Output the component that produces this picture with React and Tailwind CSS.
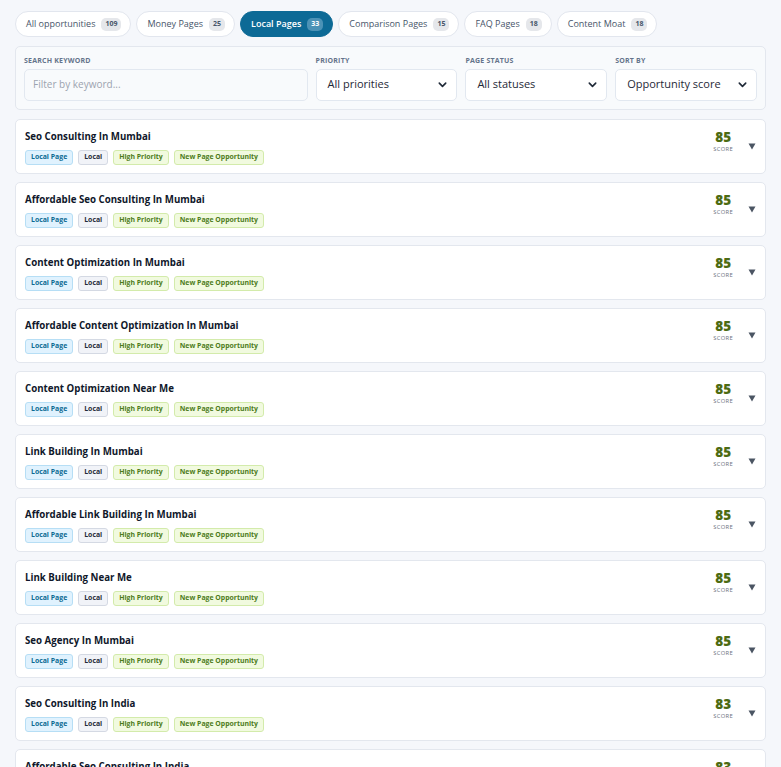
const tabs = [
  { label: 'All opportunities', count: 109 },
  { label: 'Money Pages', count: 25 },
  { label: 'Local Pages', count: 33, active: true },
  { label: 'Comparison Pages', count: 15 },
  { label: 'FAQ Pages', count: 18 },
  { label: 'Content Moat', count: 18 },
]

const rows = [
  ['Seo Consulting In Mumbai', 85],
  ['Affordable Seo Consulting In Mumbai', 85],
  ['Content Optimization In Mumbai', 85],
  ['Affordable Content Optimization In Mumbai', 85],
  ['Content Optimization Near Me', 85],
  ['Link Building In Mumbai', 85],
  ['Affordable Link Building In Mumbai', 85],
  ['Link Building Near Me', 85],
  ['Seo Agency In Mumbai', 85],
  ['Seo Consulting In India', 83],
  ['Affordable Seo Consulting In India', 83],
]

function Chevron() {
  return (
    <svg width="11" height="11" viewBox="0 0 24 24" fill="none" stroke="#1f2937" strokeWidth="3.5" strokeLinecap="round" strokeLinejoin="round">
      <path d="M5 9l7 7 7-7" />
    </svg>
  )
}

function SelectBox({ value }) {
  return (
    <div className="h-[32px] bg-white border border-[#e2e8f0] rounded-[5px] flex items-center justify-between pl-[11px] pr-[8px] text-[11px] text-[#1f2937]">
      <span>{value}</span>
      <Chevron />
    </div>
  )
}

function Badge({ children, tone }) {
  const tones = {
    blue: 'bg-[#e0f2fe] border-[#b6def5] text-[#0b6a93]',
    gray: 'bg-[#f1f3f8] border-[#d4d9e3] text-[#1f2937]',
    green: 'bg-[#f1fadf] border-[#d3ebab] text-[#4d7c1a]',
  }
  return (
    <span className={'h-[15px] px-[5px] rounded-[3px] border text-[6.9px] font-bold flex items-center ' + tones[tone]}>
      {children}
    </span>
  )
}

export default function App() {
  return (
    <div className="min-h-screen bg-[#f5f7fb] px-[15px] pt-[11px] pb-4" style={{ fontFamily: '"Open Sans", "Noto Sans", sans-serif' }}>
      <div className="flex gap-[5px]">
        {tabs.map(t => (
          <div
            key={t.label}
            className={
              'h-[26px] rounded-full flex items-center gap-[6px] pl-[10px] pr-[9px] text-[9px] border ' +
              (t.active ? 'bg-[#0d6a96] border-[#0d6a96] text-white font-semibold' : 'bg-white border-[#e2e6ee] text-[#475569]')
            }
          >
            <span>{t.label}</span>
            <span className={'h-[13px] px-[4px] rounded-[5px] text-[7px] font-bold flex items-center ' + (t.active ? 'bg-[#4b92b6] text-white' : 'bg-[#e5e7eb] text-[#475569]')}>
              {t.count}
            </span>
          </div>
        ))}
      </div>

      <div className="mt-[9px] bg-[#f8fafc] border border-[#e3e7ee] rounded-[5px] px-[8px] pt-[9px] pb-[8px] grid grid-cols-[2fr_1fr_1fr_1fr] gap-x-[8px]">
        <div>
          <div className="text-[7px] font-bold text-[#64748b] tracking-[0.2px] mb-[2px]">SEARCH KEYWORD</div>
          <div className="h-[32px] bg-[#f8fafc] border border-[#e2e8f0] rounded-[5px] flex items-center pl-[8px] text-[10px] text-[#9ca3af]">
            Filter by keyword...
          </div>
        </div>
        <div>
          <div className="text-[7px] font-bold text-[#64748b] tracking-[0.2px] mb-[2px]">PRIORITY</div>
          <SelectBox value="All priorities" />
        </div>
        <div>
          <div className="text-[7px] font-bold text-[#64748b] tracking-[0.2px] mb-[2px]">PAGE STATUS</div>
          <SelectBox value="All statuses" />
        </div>
        <div>
          <div className="text-[7px] font-bold text-[#64748b] tracking-[0.2px] mb-[2px]">SORT BY</div>
          <SelectBox value="Opportunity score" />
        </div>
      </div>

      <div className="mt-[9px] flex flex-col gap-[8px]">
        {rows.map(([title, score]) => (
          <div key={title} className="h-[55px] bg-white border border-[#e3e7ee] rounded-[5px] flex justify-between pl-[9px] pr-[9px]">
            <div className="pt-[10px]">
              <div className="text-[9.7px] font-bold text-[#0f172a] leading-[14px]">{title}</div>
              <div className="flex gap-[5px] mt-[6px]">
                <Badge tone="blue">Local Page</Badge>
                <Badge tone="gray">Local</Badge>
                <Badge tone="green">High Priority</Badge>
                <Badge tone="green">New Page Opportunity</Badge>
              </div>
            </div>
            <div className="flex items-center gap-[15px]">
              <div className="flex flex-col items-center -mt-[10px]">
                <div className="text-[13.5px] font-extrabold text-[#4d6b12] leading-[15px]">{score}</div>
                <div className="text-[5.8px] text-[#6b7280] tracking-[0.3px] leading-[8px]">SCORE</div>
              </div>
              <svg width="8" height="7" viewBox="0 0 8 7">
                <path d="M0.5 0.5h7L4 6.5z" fill="#4b5563" />
              </svg>
            </div>
          </div>
        ))}
      </div>
    </div>
  )
}
